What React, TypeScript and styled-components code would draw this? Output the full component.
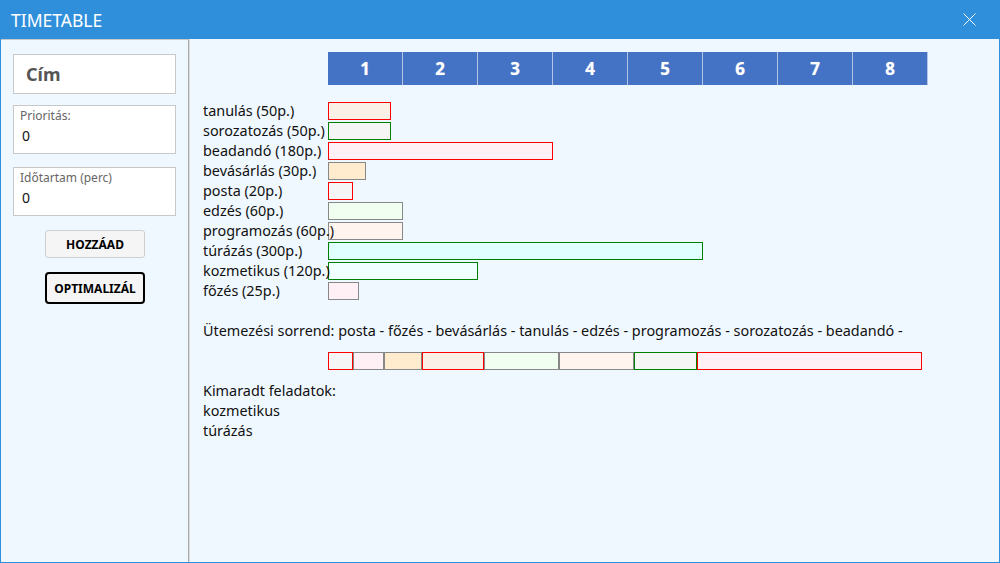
import styled, { createGlobalStyle } from "styled-components";

const GlobalStyle = createGlobalStyle`
  html, body {
    margin: 0;
    padding: 0;
    background: #f0f8ff;
  }
  body {
    font-family: "Noto Sans", "Open Sans", sans-serif;
  }
`;

const Window = styled.div`
  width: 1000px;
  height: 563px;
  box-sizing: border-box;
  display: flex;
  flex-direction: column;
  border: 1px solid #2f8fdb;
  border-top: none;
  background: #f0f8ff;
  color: #111;
`;

const TitleBar = styled.div`
  height: 39px;
  flex-shrink: 0;
  background: #2f8fdb;
  color: #fff;
  display: flex;
  align-items: center;
  justify-content: space-between;
  padding: 0 18px 0 11px;
  margin: 0 -1px;
  font-size: 17.5px;
`;

const CloseButton = styled.div`
  width: 14px;
  height: 14px;
  display: flex;
  align-items: center;
  justify-content: center;
  margin-right: 6px;
`;

const Body = styled.div`
  flex: 1;
  display: flex;
  flex-direction: row;
  min-height: 0;
`;

const Sidebar = styled.div`
  width: 188px;
  flex-shrink: 0;
  box-sizing: border-box;
  padding: 14px 12px 0 12px;
  border-top: 1px solid #c8c8c8;
  border-right: 1px solid #a8a8a8;
  box-shadow: 1px 0 0 #dcdcdc;
  display: flex;
  flex-direction: column;
  align-items: flex-start;
`;

const TitleBox = styled.div`
  width: 163px;
  height: 40px;
  box-sizing: border-box;
  background: #fff;
  border: 1px solid #c8c8c8;
  display: flex;
  align-items: center;
  padding-left: 12px;
  font-size: 18px;
  font-weight: 700;
  color: #555;
`;

const FieldBox = styled.div<{ $gap: number }>`
  width: 163px;
  height: 49px;
  margin-top: ${(p) => p.$gap}px;
  box-sizing: border-box;
  background: #fff;
  border: 1px solid #c8c8c8;
  padding: 1px 6px 0 6px;
  display: flex;
  flex-direction: column;
`;

const FieldLabel = styled.div`
  font-size: 12px;
  color: #666;
  line-height: 17px;
`;

const FieldValue = styled.div`
  font-size: 14px;
  color: #111;
  line-height: 24px;
  padding-left: 2px;
`;

const Buttons = styled.div`
  align-self: stretch;
  display: flex;
  flex-direction: column;
  align-items: center;
  gap: 14px;
  margin-top: 14px;
  padding-left: 1px;
`;

const Button = styled.div<{ $primary?: boolean }>`
  width: 100px;
  height: ${(p) => (p.$primary ? 32 : 28)}px;
  box-sizing: border-box;
  display: flex;
  align-items: center;
  justify-content: center;
  font-size: 12px;
  font-weight: 700;
  color: #000;
  background: #f5f5f5;
  border: ${(p) => (p.$primary ? "2px solid #000" : "1px solid #cfcfcf")};
  border-radius: ${(p) => (p.$primary ? 4 : 3)}px;
`;

const Main = styled.div`
  flex: 1;
  padding: 13px 0 0 14px;
  display: flex;
  flex-direction: column;
  font-size: 14.4px;
`;

const Header = styled.div`
  margin-left: 125px;
  display: flex;
  flex-direction: row;
`;

const HeaderCell = styled.div`
  width: 75px;
  height: 33px;
  box-sizing: border-box;
  background: #4472c4;
  border-right: 1px solid #b4c6e8;
  color: #fff;
  font-weight: 700;
  font-size: 17px;
  display: flex;
  align-items: center;
  justify-content: center;
  text-shadow: 0 0 1px rgba(255, 255, 255, 0.6);
`;

const TaskList = styled.div`
  margin-top: 16px;
  display: flex;
  flex-direction: column;
`;

const TaskRow = styled.div`
  height: 20px;
  display: grid;
  grid-template-columns: 125px 1fr;
  align-items: center;
`;

const TaskLabel = styled.div`
  white-space: nowrap;
  line-height: 20px;
  position: relative;
  z-index: 1;
`;

const Bar = styled.div<{ $border: string; $fill: string }>`
  height: 18px;
  box-sizing: border-box;
  border: 1px solid ${(p) => p.$border};
  background: ${(p) => p.$fill};
`;

const TextLine = styled.div<{ $gap?: number }>`
  line-height: 20px;
  height: 20px;
  margin-top: ${(p) => p.$gap ?? 0}px;
  white-space: nowrap;
`;

const ScheduleBar = styled.div`
  margin: 10px 0 0 125px;
  height: 20px;
  display: flex;
  align-items: center;
`;

type Task = { name: string; min: number; border: string; fill: string };

const RED = "#ff0000";
const GREEN = "#008000";
const GRAY = "#888888";

const tasks: Task[] = [
  { name: "tanulás", min: 50, border: RED, fill: "#faf0e6" },
  { name: "sorozatozás", min: 50, border: GREEN, fill: "#f5f5f5" },
  { name: "beadandó", min: 180, border: RED, fill: "#fff0f5" },
  { name: "bevásárlás", min: 30, border: GRAY, fill: "#ffebcd" },
  { name: "posta", min: 20, border: RED, fill: "#f5f5f5" },
  { name: "edzés", min: 60, border: GRAY, fill: "#f0fff0" },
  { name: "programozás", min: 60, border: GRAY, fill: "#fff5ee" },
  { name: "túrázás", min: 300, border: GREEN, fill: "#e0ffff" },
  { name: "kozmetikus", min: 120, border: GREEN, fill: "#f0ffff" },
  { name: "főzés", min: 25, border: GRAY, fill: "#fff0f5" },
];

const order = [
  "posta",
  "főzés",
  "bevásárlás",
  "tanulás",
  "edzés",
  "programozás",
  "sorozatozás",
  "beadandó",
];

const skipped = ["kozmetikus", "túrázás"];

const PX_PER_MIN = 1.25;

export default function App() {
  const scheduled = order.map((n) => tasks.find((t) => t.name === n)!);

  return (
    <>
      <GlobalStyle />
      <Window>
        <TitleBar>
          <span>TIMETABLE</span>
          <CloseButton>
            <svg width="13" height="13" viewBox="0 0 13 13">
              <path d="M0.5 0.5 L12.5 12.5 M12.5 0.5 L0.5 12.5" stroke="#fff" strokeWidth="1" />
            </svg>
          </CloseButton>
        </TitleBar>
        <Body>
          <Sidebar>
            <TitleBox>Cím</TitleBox>
            <FieldBox $gap={11}>
              <FieldLabel>Prioritás:</FieldLabel>
              <FieldValue>0</FieldValue>
            </FieldBox>
            <FieldBox $gap={13}>
              <FieldLabel>Időtartam (perc)</FieldLabel>
              <FieldValue>0</FieldValue>
            </FieldBox>
            <Buttons>
              <Button>HOZZÁAD</Button>
              <Button $primary>OPTIMALIZÁL</Button>
            </Buttons>
          </Sidebar>
          <Main>
            <Header>
              {[1, 2, 3, 4, 5, 6, 7, 8].map((n) => (
                <HeaderCell key={n}>{n}</HeaderCell>
              ))}
            </Header>
            <TaskList>
              {tasks.map((t) => (
                <TaskRow key={t.name}>
                  <TaskLabel>
                    {t.name} ({t.min}p.)
                  </TaskLabel>
                  <Bar
                    $border={t.border}
                    $fill={t.fill}
                    style={{ width: t.min * PX_PER_MIN }}
                  />
                </TaskRow>
              ))}
            </TaskList>
            <TextLine $gap={20}>
              Ütemezési sorrend: {order.map((n) => n + " - ").join("")}
            </TextLine>
            <ScheduleBar>
              {scheduled.map((t) => (
                <Bar
                  key={t.name}
                  $border={t.border}
                  $fill={t.fill}
                  style={{ width: t.min * PX_PER_MIN }}
                />
              ))}
            </ScheduleBar>
            <TextLine $gap={10}>Kimaradt feladatok:</TextLine>
            {skipped.map((s) => (
              <TextLine key={s}>{s}</TextLine>
            ))}
          </Main>
        </Body>
      </Window>
    </>
  );
}
